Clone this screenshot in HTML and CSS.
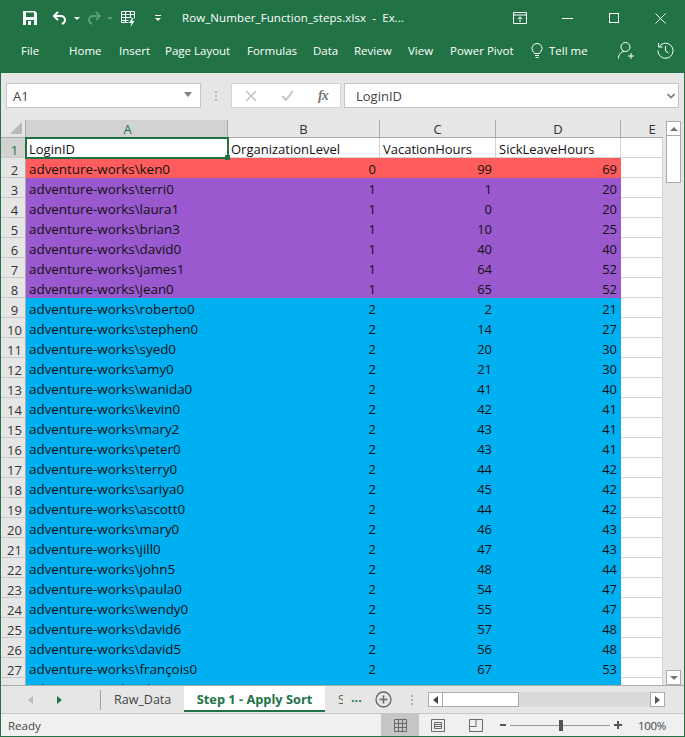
FILE: index.html
```html
<!DOCTYPE html>
<html lang="en">
<head>
<meta charset="utf-8">
<title>Row_Number_Function_steps.xlsx - Excel</title>
<link rel="stylesheet" href="styles.css">
</head>
<body>
<div class="window">
  <header class="ribbon">
    <div class="titlebar">
      <svg class="ic save" width="16" height="16" viewBox="0 0 16 16"><path d="M1 1h12l2 2v12H1z" fill="#fff"/><rect x="4" y="2.500" width="8" height="4.500" fill="#217346"/><rect x="4" y="10" width="8" height="5" fill="#217346"/><rect x="6" y="11" width="3" height="4" fill="#fff"/></svg>
      <svg class="ic undo" width="16" height="16" viewBox="0 0 16 16" fill="none" stroke="#fff" stroke-width="2"><path d="M6 2L2 6l4 4"/><path d="M3 6h6a4 4 0 0 1 4 4c0 2-1 3-3 4"/></svg>
      <span class="caret"></span>
      <svg class="ic redo" width="16" height="16" viewBox="0 0 16 16" fill="none" stroke="#5f9b7d" stroke-width="2"><path d="M10 2l4 4-4 4"/><path d="M13 6H7a4 4 0 0 0-4 4c0 2 1 3 3 4"/></svg>
      <span class="caret dim"></span>
      <svg class="ic quick" width="17" height="17" viewBox="0 0 17 17" fill="none" stroke="#fff"><path d="M1.500 1.500h13v7M1.500 1.500v11h7M1.500 4.500h13M1.500 7.500h10M1.500 10.500h7M5.500 1.500v11M10.500 1.500v6"/><path d="M12 8l-3 5h2.500l-1 4 4-6h-2.500l1.500-3z" fill="#fff" stroke="none"/></svg>
      <span class="custom"></span>
      <span class="doc">Row_Number_Function_steps.xlsx&nbsp; -&nbsp; Ex...</span>
      <svg class="ic restore" width="14" height="12" viewBox="0 0 14 12" fill="none" stroke="#fff"><path d="M.5.500h13v11H.5zM.5 3h13"/><path d="M7 10V5M4.800 7L7 4.800 9.200 7"/></svg>
      <svg class="ic min" width="11" height="1" viewBox="0 0 11 1"><rect width="11" height="1" fill="#fff"/></svg>
      <svg class="ic max" width="10" height="10" viewBox="0 0 10 10" fill="none" stroke="#fff"><rect x=".5" y=".5" width="9" height="9"/></svg>
      <svg class="ic close" width="11" height="11" viewBox="0 0 11 11" stroke="#fff" fill="none"><path d="M.5.500l10 10M10.500.500l-10 10"/></svg>
    </div>
    <nav class="tabs">
      <span class="tab t-file">File</span>
      <span class="tab t-home">Home</span>
      <span class="tab t-insert">Insert</span>
      <span class="tab t-layout">Page Layout</span>
      <span class="tab t-formulas">Formulas</span>
      <span class="tab t-data">Data</span>
      <span class="tab t-review">Review</span>
      <span class="tab t-view">View</span>
      <span class="tab t-pivot">Power Pivot</span>
      <svg class="ic bulb" width="12" height="16" viewBox="0 0 12 16" fill="none" stroke="#fff"><path d="M3.500 10.500C2.500 8.500 1 7.500 1 5.500a5 5 0 0 1 10 0c0 2-1.500 3-2.500 5z"/><path d="M4 12.500h4M4.500 14.500h3"/></svg>
      <span class="tab t-tell">Tell me</span>
      <svg class="ic person" width="16" height="17" viewBox="0 0 16 17" fill="none" stroke="#fff"><circle cx="7.500" cy="5" r="4.500"/><path d="M.5 16.500c0-4 2.500-7 5.500-7M10 14h6M13 11v6"/></svg>
      <svg class="ic history" width="17" height="17" viewBox="0 0 17 17" fill="none" stroke="#fff"><path d="M2.300 4.500A7.500 7.500 0 1 1 1 8.500"/><path d="M1.500 1v4h4M8.500 4v5l3 2"/></svg>
    </nav>
  </header>

  <div class="formula">
    <div class="namebox"><span>A1</span><i class="down"></i></div>
    <span class="vdots"></span>
    <div class="fxbtns">
      <svg width="12" height="12" viewBox="0 0 12 12" stroke="#c6c6c6" stroke-width="1.600" fill="none"><path d="M1 1l10 10M11 1L1 11"/></svg>
      <svg width="13" height="11" viewBox="0 0 13 11" stroke="#c6c6c6" stroke-width="2" fill="none"><path d="M1 6l4 4 7-9"/></svg>
      <span class="fx">fx</span>
    </div>
    <div class="fxinput"><span>LoginID</span>
      <svg width="8" height="6" viewBox="0 0 8 6" stroke="#7a7a7a" stroke-width="1.600" fill="none"><path d="M.5 1L4 4.500 7.500 1"/></svg>
    </div>
  </div>

  <div class="workarea">
    <div class="sheet">
      <div class="hd corner"><i></i></div><div class="hd sel">A</div><div class="hd">B</div><div class="hd">C</div><div class="hd">D</div><div class="hd end">E</div>
      <div class="rn sel">1</div><div class="c lbl active">LoginID<i class="handle"></i></div><div class="c lbl">OrganizationLevel</div><div class="c lbl">VacationHours</div><div class="c lbl">SickLeaveHours</div><div class="c"></div>
      <div class="rn">2</div><div class="c red">adventure-works\ken0</div><div class="c red num">0</div><div class="c red num">99</div><div class="c red num">69</div><div class="c"></div>
      <div class="rn">3</div><div class="c pur">adventure-works\terri0</div><div class="c pur num">1</div><div class="c pur num">1</div><div class="c pur num">20</div><div class="c"></div>
      <div class="rn">4</div><div class="c pur">adventure-works\laura1</div><div class="c pur num">1</div><div class="c pur num">0</div><div class="c pur num">20</div><div class="c"></div>
      <div class="rn">5</div><div class="c pur">adventure-works\brian3</div><div class="c pur num">1</div><div class="c pur num">10</div><div class="c pur num">25</div><div class="c"></div>
      <div class="rn">6</div><div class="c pur">adventure-works\david0</div><div class="c pur num">1</div><div class="c pur num">40</div><div class="c pur num">40</div><div class="c"></div>
      <div class="rn">7</div><div class="c pur">adventure-works\james1</div><div class="c pur num">1</div><div class="c pur num">64</div><div class="c pur num">52</div><div class="c"></div>
      <div class="rn">8</div><div class="c pur">adventure-works\jean0</div><div class="c pur num">1</div><div class="c pur num">65</div><div class="c pur num">52</div><div class="c"></div>
      <div class="rn">9</div><div class="c blu">adventure-works\roberto0</div><div class="c blu num">2</div><div class="c blu num">2</div><div class="c blu num">21</div><div class="c"></div>
      <div class="rn">10</div><div class="c blu">adventure-works\stephen0</div><div class="c blu num">2</div><div class="c blu num">14</div><div class="c blu num">27</div><div class="c"></div>
      <div class="rn">11</div><div class="c blu">adventure-works\syed0</div><div class="c blu num">2</div><div class="c blu num">20</div><div class="c blu num">30</div><div class="c"></div>
      <div class="rn">12</div><div class="c blu">adventure-works\amy0</div><div class="c blu num">2</div><div class="c blu num">21</div><div class="c blu num">30</div><div class="c"></div>
      <div class="rn">13</div><div class="c blu">adventure-works\wanida0</div><div class="c blu num">2</div><div class="c blu num">41</div><div class="c blu num">40</div><div class="c"></div>
      <div class="rn">14</div><div class="c blu">adventure-works\kevin0</div><div class="c blu num">2</div><div class="c blu num">42</div><div class="c blu num">41</div><div class="c"></div>
      <div class="rn">15</div><div class="c blu">adventure-works\mary2</div><div class="c blu num">2</div><div class="c blu num">43</div><div class="c blu num">41</div><div class="c"></div>
      <div class="rn">16</div><div class="c blu">adventure-works\peter0</div><div class="c blu num">2</div><div class="c blu num">43</div><div class="c blu num">41</div><div class="c"></div>
      <div class="rn">17</div><div class="c blu">adventure-works\terry0</div><div class="c blu num">2</div><div class="c blu num">44</div><div class="c blu num">42</div><div class="c"></div>
      <div class="rn">18</div><div class="c blu">adventure-works\sariya0</div><div class="c blu num">2</div><div class="c blu num">45</div><div class="c blu num">42</div><div class="c"></div>
      <div class="rn">19</div><div class="c blu">adventure-works\ascott0</div><div class="c blu num">2</div><div class="c blu num">44</div><div class="c blu num">42</div><div class="c"></div>
      <div class="rn">20</div><div class="c blu">adventure-works\mary0</div><div class="c blu num">2</div><div class="c blu num">46</div><div class="c blu num">43</div><div class="c"></div>
      <div class="rn">21</div><div class="c blu">adventure-works\jill0</div><div class="c blu num">2</div><div class="c blu num">47</div><div class="c blu num">43</div><div class="c"></div>
      <div class="rn">22</div><div class="c blu">adventure-works\john5</div><div class="c blu num">2</div><div class="c blu num">48</div><div class="c blu num">44</div><div class="c"></div>
      <div class="rn">23</div><div class="c blu">adventure-works\paula0</div><div class="c blu num">2</div><div class="c blu num">54</div><div class="c blu num">47</div><div class="c"></div>
      <div class="rn">24</div><div class="c blu">adventure-works\wendy0</div><div class="c blu num">2</div><div class="c blu num">55</div><div class="c blu num">47</div><div class="c"></div>
      <div class="rn">25</div><div class="c blu">adventure-works\david6</div><div class="c blu num">2</div><div class="c blu num">57</div><div class="c blu num">48</div><div class="c"></div>
      <div class="rn">26</div><div class="c blu">adventure-works\david5</div><div class="c blu num">2</div><div class="c blu num">56</div><div class="c blu num">48</div><div class="c"></div>
      <div class="rn">27</div><div class="c blu">adventure-works\françois0</div><div class="c blu num">2</div><div class="c blu num">67</div><div class="c blu num">53</div><div class="c"></div>
      <div class="rn">28</div><div class="c blu">adventure-works\alan0</div><div class="c blu num">2</div><div class="c blu num">68</div><div class="c blu num">54</div><div class="c"></div>
    </div>
    <div class="vscroll">
      <div class="sbtn"><i class="up"></i></div>
      <div class="vthumb"></div>
      <div class="vtrack"></div>
      <div class="sbtn"><i class="dn"></i></div>
    </div>
  </div>

  <div class="sheetbar">
    <i class="arr-l dim"></i>
    <i class="arr-r"></i>
    <span class="sep"></span>
    <span class="sheettab">Raw_Data</span>
    <span class="sheettab on">Step 1 - Apply Sort</span>
    <span class="sheettab cut">S</span>
    <span class="more">...</span>
    <svg class="plus" width="17" height="17" viewBox="0 0 17 17" fill="none" stroke="#666"><circle cx="8.500" cy="8.500" r="7.500" stroke-width="1.300"/><path d="M8.500 4.500v8M4.500 8.500h8" stroke-width="1.600"/></svg>
    <span class="vdots small"></span>
    <div class="hscroll">
      <div class="hbtn"><i class="arr-l"></i></div>
      <div class="hthumb"></div>
      <div class="htrack"></div>
      <div class="hbtn"><i class="arr-r"></i></div>
    </div>
  </div>

  <footer class="status">
    <span class="ready">Ready</span>
    <div class="views">
      <div class="view on"><svg width="13" height="13" viewBox="0 0 13 13" fill="none" stroke="#6a6a6a"><path d="M.5.500h12v12H.5zM.5 4.500h12M.5 8.500h12M4.500.500v12M8.500.500v12"/></svg></div>
      <div class="view"><svg width="14" height="13" viewBox="0 0 14 13" fill="none" stroke="#6a6a6a"><path d="M.5.500h13v12H.5zM3.500 3.500h7v6h-7zM3.500 5.500h7M3.500 7.500h7"/></svg></div>
      <div class="view"><svg width="14" height="13" viewBox="0 0 14 13" fill="none" stroke="#6a6a6a"><path d="M.5.500h13v12H.5zM.5 7.500h6.500V.5M7 7.500"/></svg></div>
    </div>
    <div class="zoom">
      <span class="zminus"></span>
      <div class="zslider"><i></i></div>
      <span class="zplus"></span>
    </div>
    <span class="pct">100%</span>
  </footer>
</div>
</body>
</html>
```
FILE: styles.css
```css
* { box-sizing: border-box; }
html, body { margin: 0; padding: 0; }
body { font-family: "Open Sans", "Noto Sans", "Liberation Sans", sans-serif; background: #e6e6e6; }
.window {
  width: 685px; height: 737px; overflow: hidden;
  display: flex; flex-direction: column;
  border: 1px solid #217346; border-top: 0;
  background: #e6e6e6;
}
.ic { display: block; flex: none; }
i { display: block; }

/* ribbon */
.ribbon { height: 73px; background: #217346; color: #fff; flex: none; margin: 0 -1px; }
.titlebar { height: 36px; display: flex; align-items: center; position: relative; }
.save { margin-left: 22px; }
.undo { margin-left: 14px; }
.caret { width: 0; height: 0; border: 3px solid transparent; border-top: 3px solid #fff; border-bottom: 0; margin-left: 6px; flex: none; }
.caret.dim { border-top-color: #5f9b7d; }
.redo { margin-left: 6px; }
.quick { margin-left: 7px; }
.titlebar .caret.dim { margin-left: 5px; }
.custom { width: 6px; height: 6px; margin-left: 18px; border-top: 1px solid #fff; flex: none; position: relative; }
.custom::after { content: ""; position: absolute; left: 0; top: 2px; border: 3px solid transparent; border-top: 3px solid #fff; border-bottom: 0; }
.doc { margin-left: 21px; margin-top: -2px; font-size: 11.500px; letter-spacing: .1px; white-space: nowrap; width: 331px; flex: none; }
.restore { margin-left: 0; }
.min { margin-left: 35px; }
.max { margin-left: 36px; }
.close { margin-left: 36px; }

.tabs { height: 37px; display: flex; align-items: flex-start; padding-top: 6px; font-size: 11.500px; }
.tab { white-space: nowrap; flex: none; line-height: 17px; }
.t-file { margin-left: 21px; width: 48px; }
.t-home { width: 50px; }
.t-insert { width: 46px; }
.t-layout { width: 82px; }
.t-formulas { width: 66px; }
.t-data { width: 41px; }
.t-review { width: 54px; }
.t-view { width: 42px; }
.t-pivot { width: 81px; }
.bulb { margin-top: 1px; }
.t-tell { margin-left: 6px; width: 69px; }
.person { margin-top: 0; }
.history { margin-left: 23px; }

/* formula bar */
.formula { height: 47px; flex: none; padding: 10px 5px 12px 5px; display: flex; align-items: stretch; font-size: 13px; color: #444; }
.namebox { width: 195px; background: #fff; border: 1px solid #c6c6c6; display: flex; align-items: center; justify-content: space-between; padding: 0 6px 0 6px; }
.down { width: 0; height: 0; border: 4px solid transparent; border-top: 5px solid #808080; border-bottom: 0; margin-right: 2px; margin-top: -2px; }
.vdots { width: 2px; margin: 0 14px; flex: none; align-self: center; height: 10px;
  background: repeating-linear-gradient(#b4b4b4 0 2px, transparent 2px 4px); }
.fxbtns { width: 110px; background: #fff; border: 1px solid #d4d4d4; display: flex; align-items: center; padding-left: 13px; gap: 24px; }
.fx { font-family: "Liberation Serif", serif; font-style: italic; font-weight: 700; color: #777; font-size: 14px; letter-spacing: -1px; }
.fxinput { flex: 1; margin-left: 3px; background: #fff; border: 1px solid #c6c6c6; display: flex; align-items: center; justify-content: space-between; padding: 0 3px 0 11px; font-size: 13px; }

/* sheet */
.workarea { flex: 1; min-height: 0; display: flex; background: #e6e6e6; overflow: hidden; }
.sheet {
  width: 662px; flex: none; align-self: flex-start;
  display: grid;
  grid-template-columns: 25px 202px 152px 116px 125px 42px;
  grid-template-rows: 18px 20px repeat(27, 20px);
  font-size: 13.400px; color: #111; background: #fff;
}
.hd { background: #e6e6e6; border-right: 1px solid #ababab; border-bottom: 1px solid #ababab; display: flex; align-items: center; justify-content: center; color: #333; font-size: 13px; line-height: 1; padding-top: 2px; }
.hd.sel { background: #d2d2d2; color: #217346; padding-left: 2px; }
.hd.end { border-right: 0; padding-left: 20px; }
.corner { position: relative; }
.corner i { position: absolute; right: 3px; bottom: 3px; width: 0; height: 0; border-left: 12px solid transparent; border-bottom: 12px solid #b8b8b8; }
.rn { background: #e6e6e6; border-right: 1px solid #ababab; border-bottom: 1px solid #c9c9c9; display: flex; align-items: center; justify-content: center; color: #333; font-size: 13px; padding: 4px 0 0 3px; }
.rn.sel { background: #d2d2d2; color: #217346; }
.c { border-right: 1px solid #d4d4d4; border-bottom: 1px solid #d4d4d4; padding: 2px 3px 0; line-height: 19px; white-space: nowrap; overflow: hidden; background: #fff; }
.lbl { font-size: 13px; padding-left: 3px; }
.num { text-align: right; font-size: 13px; }
.red { background: #ff5d5d; border-color: #ff5d5d; }
.pur { background: #9b59cf; border-color: #9b59cf; }
.blu { background: #00b0f0; border-color: #00b0f0; }
.active { position: relative; overflow: visible; outline: 2px solid #217346; outline-offset: -1px; z-index: 1; }
.handle { position: absolute; right: -3px; bottom: -3px; width: 5px; height: 5px; background: #217346; }

.vscroll { flex: 1; display: flex; flex-direction: column; padding-top: 1px; }
.sbtn { height: 15px; flex: none; background: #fff; border: 1px solid #ababab; display: flex; align-items: center; justify-content: center; width: 15px; margin-left: 3px; }
.up { width: 0; height: 0; border: 4px solid transparent; border-bottom: 4px solid #777; border-top: 0; }
.dn { width: 0; height: 0; border: 4px solid transparent; border-top: 4px solid #777; border-bottom: 0; }
.vthumb { height: 47px; background: #fff; border: 1px solid #ababab; border-top: 0; width: 15px; margin-left: 3px; flex: none; }
.vtrack { flex: 1; }

/* sheet tabs */
.sheetbar { height: 28px; flex: none; display: flex; align-items: center; border-top: 1px solid #ababab; font-size: 12.500px; color: #444; position: relative; }
.arr-l { width: 0; height: 0; border: 4px solid transparent; border-right: 5px solid #444; border-left: 0; flex: none; }
.arr-r { width: 0; height: 0; border: 4px solid transparent; border-left: 5px solid #217346; border-right: 0; flex: none; }
.sheetbar > .arr-l { margin-left: 27px; border-right-color: #bbb; }
.sheetbar > .arr-r { margin-left: 24px; }
.sep { width: 1px; height: 20px; background: #a0a0a0; margin-left: 38px; flex: none; }
.sheettab { white-space: nowrap; flex: none; margin-left: 13px; width: 70px; }
.sheettab.on { margin-left: 0; width: 141px; height: 26px; margin-top: -2px; background: #fff; color: #217346; font-weight: 700; font-size: 12.800px; text-align: center; line-height: 26px; border-bottom: 2px solid #217346; }
.sheettab.cut { margin-left: 13px; width: 5px; overflow: hidden; color: #666; }
.more { color: #217346; font-weight: 700; margin-left: 8px; width: 14px; flex: none; line-height: 1; margin-top: -2px; }
.plus { margin-left: 10px; flex: none; }
.vdots.small { margin: 0 0 0 19px; }
.hscroll { margin-left: 15px; width: 237px; height: 15px; display: flex; flex: none; background: #dadada; }
.hbtn { width: 15px; height: 15px; background: #fff; border: 1px solid #ababab; display: flex; align-items: center; justify-content: center; flex: none; }
.hbtn .arr-r { border-left-color: #555; }
.hthumb { width: 76px; background: #fff; border: 1px solid #ababab; border-left: 0; flex: none; }
.htrack { flex: 1; }

/* status */
.status { height: 23px; flex: none; border-top: 1px solid #c6c6c6; display: flex; align-items: center; font-size: 11.500px; color: #444; background: #f0f0f0; }
.ready { margin-left: 7px; width: 373px; flex: none; }
.views { display: flex; height: 100%; flex: none; }
.view { width: 38px; display: flex; align-items: center; justify-content: center; }
.view.on { background: #c6c6c6; }
.zoom { display: flex; align-items: center; margin-left: 5px; flex: none; }
.zminus { width: 6px; height: 2px; background: #555; }
.zslider { width: 100px; height: 1px; background: #999; margin: 0 4px; position: relative; }
.zslider i { position: absolute; left: 49px; top: -5px; width: 4px; height: 11px; background: #555; }
.zplus { width: 8px; height: 8px; background: linear-gradient(#555,#555) center/8px 2px no-repeat, linear-gradient(#555,#555) center/2px 8px no-repeat; }
.pct { margin-left: 16px; font-size: 11.500px; letter-spacing: -.3px; }
```
